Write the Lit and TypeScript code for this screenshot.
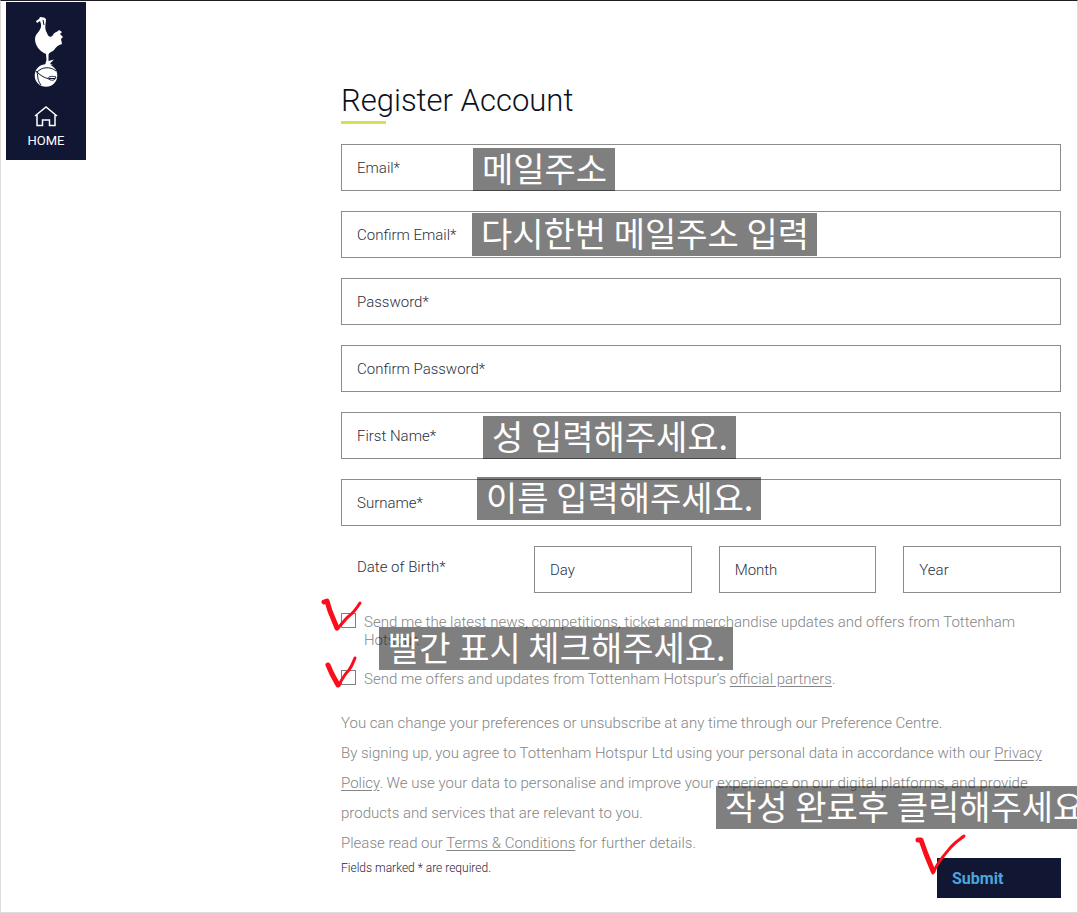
import { LitElement, html, css, svg } from "lit";
import { customElement, property } from "lit/decorators.js";

@customElement("form-field")
class FormField extends LitElement {
  @property() label = "";
  @property() type = "text";

  static styles = css`
    :host { display: block; min-width: 0; }
    .box {
      display: flex;
      align-items: center;
      gap: 8px;
      box-sizing: border-box;
      height: 47px;
      padding: 0 15px;
      border: 1px solid #8c8c8c;
      background: #fff;
      color: #2b3040;
      cursor: text;
    }
    .input {
      flex: 1;
      min-width: 0;
      border: 0;
      outline: 0;
      padding: 0;
      background: transparent;
      font: inherit;
      color: inherit;
    }
  `;

  render() {
    return html`<label class="box"><span>${this.label}</span><input class="input" type=${this.type} /></label>`;
  }
}

// A hand-drawn tick: a heavy down stroke and a lighter up stroke.
const tick = (name: string, down: string, up: string) => html`
  <svg class="tick ${name}" viewBox="0 0 52 44" width="52" height="44" aria-hidden="true">
    ${svg`<path class="down" d=${down} /><path class="up" d=${up} />`}
  </svg>
`;

@customElement("app-root")
class AppRoot extends LitElement {
  static styles = css`
    :host {
      display: block;
      font-family: Roboto, "Liberation Sans", sans-serif;
      font-size: 15px;
      font-weight: 300;
      color: #858585;
    }
    .page {
      box-sizing: border-box;
      display: flex;
      align-items: flex-start;
      min-height: 100vh;
      padding: 1px 16px 14px 5px;
      border: 1px solid #dcdcdc;
      border-top-color: #1d1d22;
      overflow: hidden;
      background: #fff;
    }
    .side {
      flex: none;
      box-sizing: border-box;
      width: 80px;
      height: 158px;
      padding-top: 14px;
      display: flex;
      flex-direction: column;
      align-items: center;
      background: #111633;
      color: #fff;
    }
    .home {
      display: flex;
      flex-direction: column;
      align-items: center;
      gap: 5px;
      margin-top: 18px;
      color: #fff;
      font-size: 13px;
      font-weight: 400;
      line-height: 18px;
      text-decoration: none;
    }
    .main {
      flex: 1;
      min-width: 0;
      margin-left: 255px;
      padding-top: 78px;
    }
    .title {
      margin: 0 0 20px;
      font-size: 31px;
      line-height: 41px;
      font-weight: 300;
      color: #0c0f1c;
    }
    .title::after {
      content: "";
      display: block;
      width: 45px;
      height: 3px;
      background: #d9e04f;
    }
    .form, .fields { display: flex; flex-direction: column; }
    .fields { gap: 20px; }
    .row { position: relative; }
    .birth {
      display: grid;
      grid-template-columns: 166px 1fr 1fr 1fr;
      gap: 27px;
      color: #2b3040;
    }
    .birth-label { padding-left: 16px; line-height: 42px; }
    .checks {
      display: flex;
      flex-direction: column;
      gap: 21px;
      margin: 20px 0;
    }
    .check {
      position: relative;
      display: flex;
      align-items: flex-start;
      gap: 8px;
      line-height: 18px;
    }
    .checkbox {
      appearance: none;
      flex: none;
      box-sizing: border-box;
      width: 15px;
      height: 15px;
      margin: 0;
      border: 1px solid #808080;
      background: #fff;
    }
    .link { color: inherit; text-underline-offset: 2px; }
    .text { margin: 0; line-height: 30px; }
    .end {
      position: relative;
      display: flex;
      justify-content: space-between;
      align-items: flex-start;
    }
    .required { font-size: 12px; line-height: 20px; color: #2b2540; }
    .submit {
      width: 124px;
      height: 40px;
      padding: 0 15px;
      border: 0;
      background: #111633;
      color: #4aa6df;
      font: inherit;
      font-size: 16px;
      font-weight: 700;
      text-align: left;
    }
    .note {
      position: absolute;
      box-sizing: border-box;
      height: 43px;
      padding: 0 8px 0 9px;
      background: rgba(0, 0, 0, 0.5);
      color: #fff;
      font-family: "Noto Sans CJK KR", sans-serif;
      font-size: 34px;
      font-weight: 400;
      line-height: 40px;
      white-space: nowrap;
      pointer-events: none;
    }
    .n-email { left: 132px; top: 4px; }
    .n-confirm { left: 131px; top: 2px; }
    .n-first { left: 142px; top: 4px; }
    .n-last { left: 136px; top: -2px; }
    .n-check { left: 38px; top: 14px; }
    .n-submit { left: 375px; top: -72px; }
    .tick {
      position: absolute;
      fill: none;
      stroke: #fb0d1b;
      stroke-linecap: round;
      stroke-linejoin: round;
      pointer-events: none;
      overflow: visible;
    }
    .down { stroke-width: 5; }
    .up { stroke-width: 3; }
    .t-one { left: -20px; top: -15px; }
    .t-two { left: -17px; top: -15px; }
    .t-three { right: 95px; top: -25px; }
  `;

  render() {
    return html`
      <div class="page">
        <nav class="side">
          <svg width="36" height="72" viewBox="0 0 36 72" role="img" aria-label="Tottenham Hotspur">
            <path fill="#fff" d="M8 5 L11 3 L12 1 L16 1.500 L18 3 C18 8 16 12 19 17 C20 21 23 22 25 19 C26 16 28 17 31 14 L34 16 L32 18 L35 21 L33 23 L34 28 C30 29 28 31 26 34 C24 36 21 36 20.500 39 L20.500 45 L26 43.500 L23 46.500 L22 48 L25 49 L17 49 L18.500 44 L18 38 C11 35 7 29 7 23 C7 17 14 15 13 8 L12 5 L9 7 Z" />
            <path stroke="#111633" stroke-width="1" fill="none" d="M15 4 L16 9" />
            <circle cx="18" cy="59.500" r="11.300" fill="#fff" />
            <path fill="none" stroke="#111633" stroke-width="1" d="M8 55 C11 58 8 63 13 69 M9 56 C14 51 22 50 28 55 M9 56 C13 60 17 62 20 62.500 M20 62.500 C21 60 25 60 28 61 C27 65 23 65 20 62.500 M21 62.500 L27 62.500" />
          </svg>
          <a class="home" href="#">
            <svg width="24" height="21" viewBox="0 0 24 21" fill="none" stroke="#fff" stroke-width="1.5" aria-hidden="true">
              <path d="M1 10 L12 1 L23 10 M3 9 V19.500 H8.500 V14 H15.500 V19.500 H21 V9" />
            </svg>
            HOME
          </a>
        </nav>
        <main class="main">
          <h1 class="title">Register Account</h1>
          <form class="form" @submit=${(e: Event) => e.preventDefault()}>
            <div class="fields">
              <div class="row"><form-field label="Email*"></form-field><span class="note n-email">메일주소</span></div>
              <div class="row"><form-field label="Confirm Email*"></form-field><span class="note n-confirm">다시한번 메일주소 입력</span></div>
              <form-field label="Password*" type="password"></form-field>
              <form-field label="Confirm Password*" type="password"></form-field>
              <div class="row"><form-field label="First Name*"></form-field><span class="note n-first">성 입력해주세요.</span></div>
              <div class="row"><form-field label="Surname*"></form-field><span class="note n-last">이름 입력해주세요.</span></div>
              <div class="birth" role="group" aria-labelledby="birth">
                <span class="birth-label" id="birth">Date of Birth*</span>
                <form-field label="Day"></form-field>
                <form-field label="Month"></form-field>
                <form-field label="Year"></form-field>
              </div>
            </div>
            <div class="checks">
              <div class="check">
                <input class="checkbox" type="checkbox" id="news" />
                <label for="news">Send me the latest news, competitions, ticket and merchandise updates and offers from Tottenham Hotspur.</label>
                <span class="note n-check">빨간 표시 체크해주세요.</span>
                ${tick("t-one", "M3 4 L6 3 L9 13 L16 30", "M16 31 C22 25 24 21 28 18 C32 15 34 13 39 5")}
              </div>
              <div class="check">
                <input class="checkbox" type="checkbox" id="offers" />
                <label for="offers">Send me offers and updates from Tottenham Hotspur’s <a class="link" href="#">official partners</a>.</label>
                ${tick("t-two", "M4 10 L8 19 L14 30", "M15 30 C18 24 20 20 25 15 C28 11 29 8 31 3")}
              </div>
            </div>
            <p class="text">You can change your preferences or unsubscribe at any time through our Preference Centre.</p>
            <p class="text">By signing up, you agree to Tottenham Hotspur Ltd using your personal data in accordance with our <a class="link" href="#">Privacy Policy</a>. We use your data to personalise and improve your experience on our digital platforms, and provide products and services that are relevant to you.</p>
            <p class="text">Please read our <a class="link" href="#">Terms &amp; Conditions</a> for further details.</p>
            <div class="end">
              <span class="required">Fields marked * are required.</span>
              <button class="submit" type="submit">Submit</button>
              <span class="note n-submit">작성 완료후 클릭해주세요.</span>
              ${tick("t-three", "M4 7 L7 7 L12 21 L19 38", "M19 40 C24 28 32 20 37 14 C41 9 45 7 50 3")}
            </div>
          </form>
        </main>
      </div>
    `;
  }
}
